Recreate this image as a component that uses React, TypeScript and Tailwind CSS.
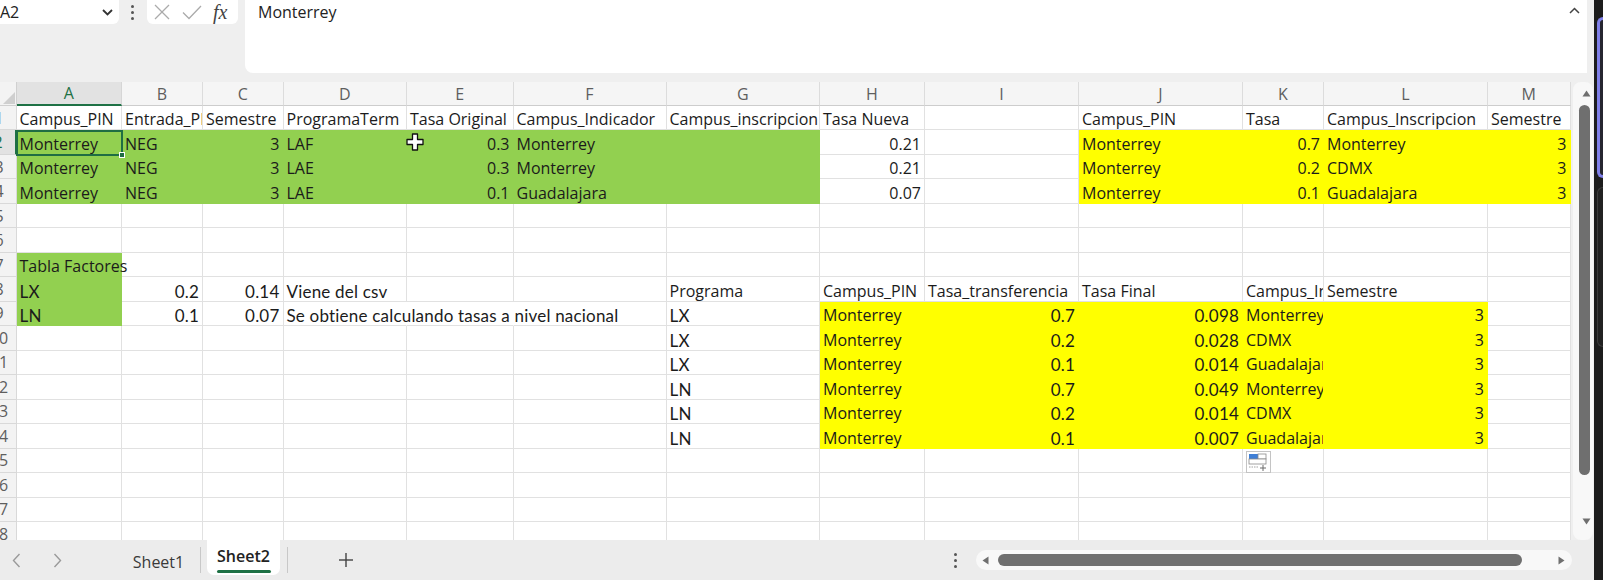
import React from 'react';

type ColDef = { k: string; w: string };
const COLS: ColDef[] = [
  { k: 'A', w: 'w-[105.5px]' },
  { k: 'B', w: 'w-[81px]' },
  { k: 'C', w: 'w-[80.5px]' },
  { k: 'D', w: 'w-[123.5px]' },
  { k: 'E', w: 'w-[106.5px]' },
  { k: 'F', w: 'w-[153px]' },
  { k: 'G', w: 'w-[153.5px]' },
  { k: 'H', w: 'w-[105px]' },
  { k: 'I', w: 'w-[154px]' },
  { k: 'J', w: 'w-[164px]' },
  { k: 'K', w: 'w-[81px]' },
  { k: 'L', w: 'w-[164px]' },
  { k: 'M', w: 'w-[82.5px]' },
];

type Cell = { v: string; r?: boolean; cal?: boolean; o?: boolean; nb?: boolean };
const L = (v: string): Cell => ({ v });
const R = (v: string): Cell => ({ v, r: true });
const CL = (v: string): Cell => ({ v, cal: true });
const CR = (v: string): Cell => ({ v, r: true, cal: true });

const DATA: Record<number, Record<string, Cell>> = {
  1: {
    A: L('Campus_PIN'), B: L('Entrada_PIN'), C: L('Semestre'), D: L('ProgramaTerm'), E: L('Tasa Original'),
    F: L('Campus_Indicador'), G: L('Campus_inscripcion'), H: L('Tasa Nueva'), J: L('Campus_PIN'), K: L('Tasa'),
    L: L('Campus_Inscripcion'), M: L('Semestre'),
  },
  2: {
    A: L('Monterrey'), B: L('NEG'), C: R('3'), D: L('LAF'), E: R('0.3'), F: L('Monterrey'), H: R('0.21'),
    J: L('Monterrey'), K: R('0.7'), L: L('Monterrey'), M: R('3'),
  },
  3: {
    A: L('Monterrey'), B: L('NEG'), C: R('3'), D: L('LAE'), E: R('0.3'), F: L('Monterrey'), H: R('0.21'),
    J: L('Monterrey'), K: R('0.2'), L: L('CDMX'), M: R('3'),
  },
  4: {
    A: L('Monterrey'), B: L('NEG'), C: R('3'), D: L('LAE'), E: R('0.1'), F: L('Guadalajara'), H: R('0.07'),
    J: L('Monterrey'), K: R('0.1'), L: L('Guadalajara'), M: R('3'),
  },
  7: { A: { v: 'Tabla Factores', o: true } },
  8: {
    A: CL('LX'), B: CR('0.2'), C: CR('0.14'), D: CL('Viene del csv'), G: L('Programa'), H: L('Campus_PIN'),
    I: L('Tasa_transferencia'), J: L('Tasa Final'), K: L('Campus_Inscripcion'), L: L('Semestre'),
  },
  9: {
    A: CL('LN'), B: CR('0.1'), C: CR('0.07'),
    D: { v: 'Se obtiene calculando tasas a nivel nacional', cal: true, o: true, nb: true },
    E: { v: '', nb: true },
    G: CL('LX'), H: L('Monterrey'), I: CR('0.7'), J: CR('0.098'), K: L('Monterrey'), L: R('3'),
  },
  10: { G: CL('LX'), H: L('Monterrey'), I: CR('0.2'), J: CR('0.028'), K: L('CDMX'), L: R('3') },
  11: { G: CL('LX'), H: L('Monterrey'), I: CR('0.1'), J: CR('0.014'), K: L('Guadalajara'), L: R('3') },
  12: { G: CL('LN'), H: L('Monterrey'), I: CR('0.7'), J: CR('0.049'), K: L('Monterrey'), L: R('3') },
  13: { G: CL('LN'), H: L('Monterrey'), I: CR('0.2'), J: CR('0.014'), K: L('CDMX'), L: R('3') },
  14: { G: CL('LN'), H: L('Monterrey'), I: CR('0.1'), J: CR('0.007'), K: L('Guadalajara'), L: R('3') },
};

function fillOf(row: number, col: string): 'g' | 'y' | null {
  if (row >= 2 && row <= 4 && 'ABCDEFG'.includes(col)) return 'g';
  if (row >= 7 && row <= 9 && col === 'A') return 'g';
  if (row >= 2 && row <= 4 && 'JKLM'.includes(col)) return 'y';
  if (row >= 9 && row <= 14 && 'HIJKL'.includes(col)) return 'y';
  return null;
}

function CellView({ row, col }: { row: number; col: ColDef }) {
  const c = DATA[row]?.[col.k];
  const f = fillOf(row, col.k);
  const fillCls =
    f === 'g'
      ? 'bg-[#92d050] border-[#92d050]'
      : f === 'y'
      ? 'bg-[#ffff00] border-[#ffff00]'
      : 'border-[#e1e1e1]';
  return (
    <div
      className={[
        'relative h-full shrink-0 border-r border-b flex items-end',
        col.w,
        fillCls,
        c?.nb ? 'border-r-transparent' : '',
        c?.r ? 'justify-end pr-[3px]' : 'pl-[3px]',
        c?.o ? 'overflow-visible z-10' : 'overflow-hidden',
      ].join(' ')}
    >
      {c && c.v ? (
        <span
          className={[
            'whitespace-nowrap leading-[19px] text-[#1b1b1b]',
            c.cal ? "font-['Lato',sans-serif] text-[17px] tracking-[0.2px]" : 'text-[16px]',
          ].join(' ')}
        >
          {c.v}
        </span>
      ) : null}
    </div>
  );
}

function RowHead({ n }: { n: number }) {
  const sel = n === 2;
  return (
    <div
      className={[
        'relative w-[16.5px] h-full shrink-0 overflow-hidden border-b',
        sel
          ? 'bg-[#e2e2e2] border-b-[#d6d6d6] border-r-2 border-r-[#1e7145] text-[#1e7145]'
          : 'bg-[#f3f3f3] border-[#d9d9d9] border-r text-[#5e5e5e]',
      ].join(' ')}
    >
      <div className="absolute right-0 top-0 h-full w-[33px] flex items-center justify-center text-[16px]">
        {n}
      </div>
    </div>
  );
}

function HeaderRow() {
  return (
    <div className="flex h-[24px] shrink-0">
      <div className="relative w-[16.5px] h-full shrink-0 bg-[#f3f3f3] border-r border-b border-[#d0d0d0]">
        <svg className="absolute right-[1px] bottom-[1px]" width="12" height="12" viewBox="0 0 12 12">
          <polygon points="12,0 12,12 0,12" fill="#cfcfcf" />
        </svg>
      </div>
      {COLS.map((c) => {
        const sel = c.k === 'A';
        return (
          <div
            key={c.k}
            className={[
              'h-full shrink-0 flex items-center justify-center text-[16px]',
              c.w,
              sel
                ? 'bg-[#e2e2e2] text-[#1e7145] border-r border-r-[#d6d6d6] border-b-2 border-b-[#1e7145]'
                : 'bg-[#f5f5f5] text-[#5e5e5e] border-r border-b border-r-[#dcdcdc] border-b-[#cdcdcd]',
            ].join(' ')}
          >
            {c.k}
          </div>
        );
      })}
    </div>
  );
}

function TriUp() {
  return (
    <svg width="9" height="7" viewBox="0 0 9 7">
      <polygon points="4.5,0.5 8.5,6.5 0.5,6.5" fill="#6f6f6f" />
    </svg>
  );
}
function TriDown() {
  return (
    <svg width="9" height="7" viewBox="0 0 9 7">
      <polygon points="0.5,0.5 8.5,0.5 4.5,6.5" fill="#6f6f6f" />
    </svg>
  );
}

export default function App() {
  const rows = Array.from({ length: 18 }, (_, i) => i + 1);
  return (
    <div className="w-[1603px] h-[580px] overflow-hidden flex bg-[#efefef] font-['Open_Sans','Noto_Sans',sans-serif] text-[#1b1b1b]">
      <div className="w-[1594px] h-full shrink-0 flex flex-col">
        {/* Top bar */}
        <div className="h-[82px] shrink-0 flex items-start">
          <div className="w-[119px] h-[24px] shrink-0 bg-white rounded-br-[6px] flex items-center">
            <span className="text-[16px] leading-[24px] text-[#222]">A2</span>
            <svg className="ml-auto mr-[6px]" width="11" height="7" viewBox="0 0 11 7">
              <polyline points="1,1 5.5,5.5 10,1" fill="none" stroke="#333" strokeWidth="1.8" />
            </svg>
          </div>
          <div className="w-[28px] h-[24px] shrink-0 flex flex-col items-start pl-[12px] pt-[5px] gap-[3px]">
            <div className="w-[3px] h-[3px] rounded-full bg-[#555]" />
            <div className="w-[3px] h-[3px] rounded-full bg-[#555]" />
            <div className="w-[3px] h-[3px] rounded-full bg-[#555]" />
          </div>
          <div className="w-[91px] h-[24px] shrink-0 bg-white rounded-b-[6px] flex items-center">
            <svg className="ml-[7px]" width="16" height="16" viewBox="0 0 16 16">
              <line x1="1" y1="1" x2="15" y2="15" stroke="#ababab" strokeWidth="1.3" />
              <line x1="15" y1="1" x2="1" y2="15" stroke="#ababab" strokeWidth="1.3" />
            </svg>
            <svg className="ml-[12px]" width="20" height="15" viewBox="0 0 20 15">
              <polyline points="1,7.5 7,13.5 19,1" fill="none" stroke="#ababab" strokeWidth="1.3" />
            </svg>
            <span className="ml-[11px] font-['Liberation_Serif',serif] italic text-[20px] leading-[24px] text-[#444]">
              fx
            </span>
          </div>
          <div className="w-[7px] shrink-0" />
          <div className="w-[1342px] h-[73px] shrink-0 bg-white rounded-bl-[8px] flex items-start">
            <span className="pl-[13px] text-[16px] leading-[24px] text-[#222]">Monterrey</span>
            <svg className="ml-auto mr-[7px] mt-[7px]" width="11" height="7" viewBox="0 0 11 7">
              <polyline points="1,6 5.5,1.5 10,6" fill="none" stroke="#444" strokeWidth="1.5" />
            </svg>
          </div>
        </div>

        {/* Grid region */}
        <div className="h-[458px] shrink-0 flex">
          <div className="relative w-[1570.5px] h-full shrink-0 overflow-hidden bg-white flex flex-col">
            <HeaderRow />
            {rows.map((n) => (
              <div key={n} className="flex h-[24.47px] shrink-0">
                <RowHead n={n} />
                {COLS.map((c) => (
                  <CellView key={c.k} row={n} col={c} />
                ))}
              </div>
            ))}

            {/* selection A2 */}
            <div className="absolute left-[15.5px] top-[47.5px] w-[107.5px] h-[26.5px] border-2 border-[#1f6e43] z-20">
              <div className="absolute right-[-4px] bottom-[-4px] w-[6px] h-[6px] bg-[#1f6e43] border border-white" />
            </div>

            {/* cell cursor */}
            <svg className="absolute left-[406px] top-[51px] z-30" width="18" height="18" viewBox="0 0 18 18">
              <path
                d="M6.5 1 H11.5 V6.5 H17 V11.5 H11.5 V17 H6.5 V11.5 H1 V6.5 H6.5 Z"
                fill="#ffffff"
                stroke="#111"
                strokeWidth="1.3"
                strokeLinejoin="round"
              />
            </svg>

            {/* paste options */}
            <svg className="absolute left-[1246px] top-[369px] z-30" width="25" height="22" viewBox="0 0 25 22">
              <rect x="0.5" y="0.5" width="24" height="21" fill="#fff" stroke="#c4c4c4" />
              <rect x="3" y="3" width="9" height="5" fill="#3f7fd6" />
              <rect x="12" y="3" width="8" height="5" fill="#fff" stroke="#8a8a8a" strokeWidth="0.8" />
              <rect x="3" y="8" width="17" height="5" fill="#fff" stroke="#8a8a8a" strokeWidth="0.8" />
              <line x1="3" y1="16" x2="12" y2="16" stroke="#8a8a8a" strokeWidth="0.8" strokeDasharray="1.5 1" />
              <line x1="17" y1="14" x2="17" y2="20" stroke="#6a6a6a" strokeWidth="1" />
              <line x1="14" y1="17" x2="20" y2="17" stroke="#6a6a6a" strokeWidth="1" />
            </svg>
          </div>

          {/* vertical scrollbar */}
          <div className="w-[23.5px] h-full shrink-0 pl-[2.5px]">
            <div className="w-[20px] h-full bg-[#f8f8f8] rounded-[8px] flex flex-col">
              <div className="pl-[8.5px] pt-[8px] h-[23px]">
                <TriUp />
              </div>
              <div className="ml-[6px] w-[11px] h-[370px] rounded-full bg-[#6f6f6f]" />
              <div className="pl-[8.5px] mt-[43px]">
                <TriDown />
              </div>
            </div>
          </div>
        </div>

        {/* Bottom bar */}
        <div className="h-[40px] shrink-0 flex items-center bg-[#ececec]">
          <div className="w-[30px] h-full shrink-0 flex items-center pl-[12px]">
            <svg width="9" height="15" viewBox="0 0 9 15">
              <polyline points="7.5,1 1.5,7.5 7.5,14" fill="none" stroke="#9a9a9a" strokeWidth="1.4" />
            </svg>
          </div>
          <div className="w-[40px] h-full shrink-0 flex items-center pl-[23px]">
            <svg width="9" height="15" viewBox="0 0 9 15">
              <polyline points="1.5,1 7.5,7.5 1.5,14" fill="none" stroke="#9a9a9a" strokeWidth="1.4" />
            </svg>
          </div>
          <div className="w-[47px] shrink-0" />
          <div className="w-[83px] h-full shrink-0 flex items-center justify-center pt-[4px] text-[16px] text-[#3a3a3a]">
            Sheet1
          </div>
          <div className="w-px h-[26px] shrink-0 bg-[#c8c8c8]" />
          <div className="w-[6px] shrink-0" />
          <div className="w-[73px] h-[35px] self-start shrink-0 bg-white rounded-b-[7px] flex flex-col items-center pt-[4px]">
            <span className="text-[16px] leading-[24px] font-semibold text-[#222]">Sheet2</span>
            <div className="w-[54px] h-[2.5px] mt-[2px] rounded-full bg-[#1e7145]" />
          </div>
          <div className="w-[7px] shrink-0" />
          <div className="w-px h-[26px] shrink-0 bg-[#c8c8c8]" />
          <div className="w-[51px] shrink-0" />
          <svg width="14" height="14" viewBox="0 0 14 14" className="shrink-0">
            <line x1="7" y1="0" x2="7" y2="14" stroke="#444" strokeWidth="1.4" />
            <line x1="0" y1="7" x2="14" y2="7" stroke="#444" strokeWidth="1.4" />
          </svg>
          <div className="w-[600px] shrink-0" />
          <div className="w-[4px] shrink-0 flex flex-col items-center gap-[3px]">
            <div className="w-[3px] h-[3px] rounded-full bg-[#555]" />
            <div className="w-[3px] h-[3px] rounded-full bg-[#555]" />
            <div className="w-[3px] h-[3px] rounded-full bg-[#555]" />
          </div>
          <div className="w-[19px] shrink-0" />
          <div className="w-[596px] h-[20px] shrink-0 rounded-full bg-[#f8f8f8] flex items-center">
            <svg className="ml-[6px]" width="7" height="9" viewBox="0 0 7 9">
              <polygon points="0.5,4.5 6.5,0.5 6.5,8.5" fill="#6f6f6f" />
            </svg>
            <div className="ml-[9px] w-[524px] h-[12px] rounded-full bg-[#6f6f6f]" />
            <svg className="ml-[36px]" width="7" height="9" viewBox="0 0 7 9">
              <polygon points="0.5,0.5 6.5,4.5 0.5,8.5" fill="#6f6f6f" />
            </svg>
          </div>
        </div>
      </div>

      {/* dark side strip */}
      <div className="w-[9px] h-full shrink-0 bg-[#1c1c1c] flex flex-col pt-[17px] pl-[3px]">
        <div className="h-[161px] w-full rounded-l-[8px] border-l-[3px] border-t-[3px] border-b-[3px] border-[#7f7fe8] bg-[#262630]" />
        <div className="h-[160px] mt-[9px] w-full rounded-l-[6px] border-l border-t border-b border-[#3c3c3c] bg-[#222]" />
      </div>
    </div>
  );
}
